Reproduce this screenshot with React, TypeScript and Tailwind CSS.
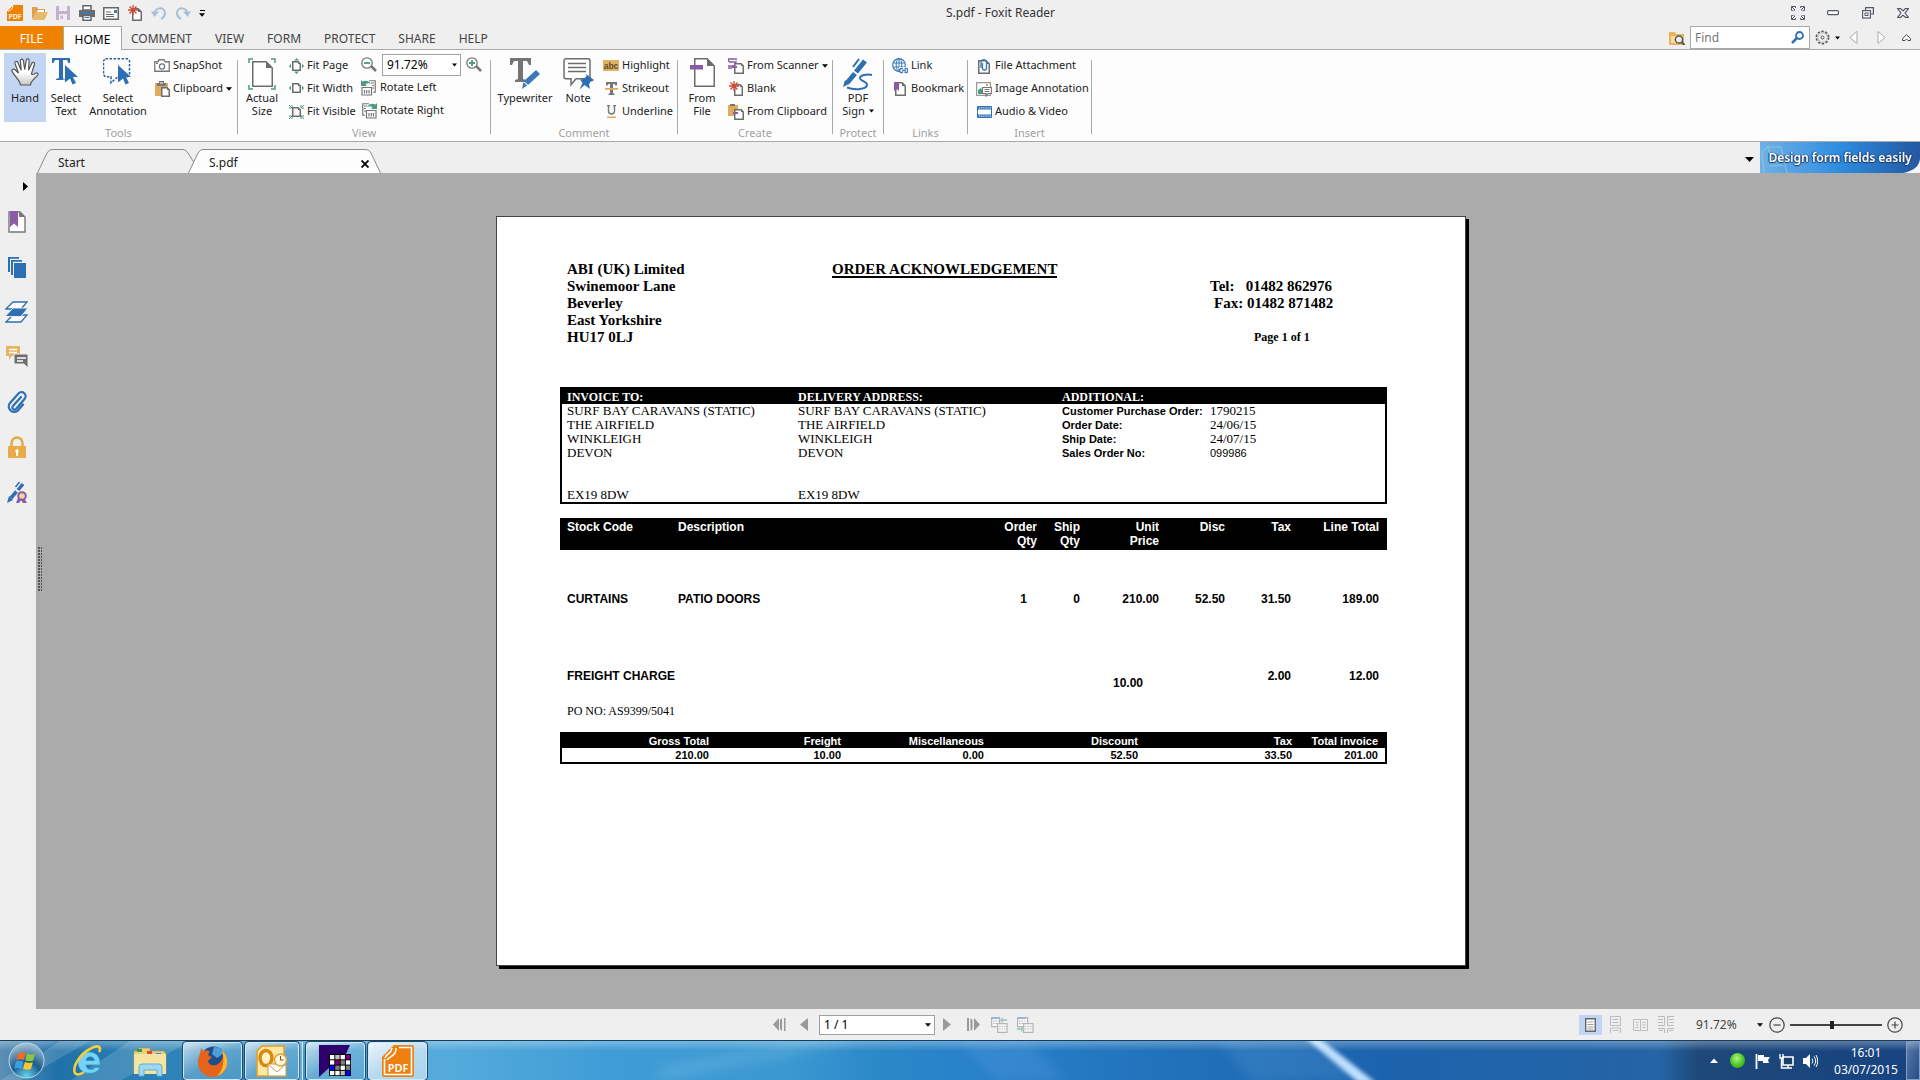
import React from "react";

const UI = "font-['Noto_Sans','Open_Sans',sans-serif]";
const TIMES = "font-['Liberation_Serif',serif]";
const ARIAL = "font-['Liberation_Sans',sans-serif]";

type IconProps = { w?: number; h?: number; box?: string; className?: string; children: React.ReactNode };

function Svg({ w = 16, h = 16, box, className = "", children }: IconProps) {
  return (
    <svg width={w} height={h} viewBox={box ?? `0 0 ${w} ${h}`} fill="none" aria-hidden="true" className={`shrink-0 ${className}`}>
      {children}
    </svg>
  );
}

const Caret = ({ w = 7 }: { w?: number }) => (
  <Svg w={w} h={4} box="0 0 7 4"><path d="M0 0h7L3.5 4z" fill="#000" /></Svg>
);

const Sheet = ({ x = 0, y = 0, w = 10, h = 13, f = 4 }) => (
  <g>
    <path d={`M${x + 0.75} ${y + 0.75}H${x + w - f}L${x + w - 0.75} ${y + f}V${y + h - 0.75}H${x + 0.75}z`} fill="#fff" stroke="#6d6d6d" strokeWidth="1.5" />
    <path d={`M${x + w - f} ${y}V${y + f}H${x + w}z`} fill="#6d6d6d" />
  </g>
);

const Spark = ({ x = 0, y = 0 }) => (
  <path transform={`translate(${x} ${y})`} d="M5 0v10M0 5h10M1.5 1.5l7 7M8.5 1.5l-7 7" stroke="#cf4a35" strokeWidth="1.3" />
);

/* Quick access */
const PdfLogo = () => (
  <Svg w={16} h={16}>
    <path d="M6 0h10v16H0V6z" fill="#f08200" />
    <path d="M0 6C1 3 3 4 4 1.500L6 0M1 6.500C3 5 5 5 6 1" stroke="#fff" strokeWidth="1" />
    <text x="8" y="13.500" textAnchor="middle" fontSize="7" fill="#fff" fontFamily="Noto Sans" fontWeight="600">PDF</text>
  </Svg>
);
const OpenIcon = () => (
  <Svg w={17} h={14}><path d="M1 13V1h5l1 2h7v3H6z" fill="#d9a050" /><path d="M7 4h6v2H6z" fill="#fff" /><path d="M1 14L5 6h12l-3.500 8z" fill="#e8b86c" /></Svg>
);
const SaveIcon = () => (
  <Svg w={14} h={14}><path d="M0 0h14v14H0z" fill="#c3b1cf" /><path d="M3 0h8v5H3zM3 8h8v6H3z" fill="#f0edf2" /><path d="M4.500 9.500H7V13H4.500z" fill="#c3b1cf" /></Svg>
);
const PrintIcon = () => (
  <Svg w={16} h={16}><path d="M4 .75h8V5H4z" fill="#fff" stroke="#666" strokeWidth="1.500" /><path d="M0 5h16v7H0z" fill="#6a6a6a" /><path d="M2 7h12v2H2z" fill="#3d78b4" /><path d="M4 10.500h8v4.750H4z" fill="#fff" stroke="#666" strokeWidth="1.500" /><path d="M5.500 12.500h5" stroke="#3d78b4" /></Svg>
);
const MailIcon = () => (
  <Svg w={16} h={13}><path d="M.75.75h14.500v11.500H.75z" fill="#fff" stroke="#666" strokeWidth="1.500" /><path d="M11 3h3v3h-3z" fill="#3d78b4" /><path d="M3 5h5M3 7.500h8M3 9.500h8" stroke="#666" /></Svg>
);
const NewIcon = () => (
  <Svg w={15} h={16}><Sheet x={4} y={3} w={10} h={13} /><Spark x={0} y={0} /></Svg>
);
const UndoIcon = ({ flip = false }) => (
  <Svg w={16} h={14}>
    <g transform={flip ? "translate(16 0) scale(-1 1)" : undefined}>
      <path d="M3.500 8C4 1 13.500.5 14 6.500c.2 3-1.500 5-4 6.500" stroke="#a9bfd8" strokeWidth="2" />
      <path d="M0 5.500h8L3.500 11z" fill="#a9bfd8" />
    </g>
  </Svg>
);

/* Ribbon, large */
const HandIcon = () => (
  <Svg w={28} h={28}>
    <path d="M8.500 24C7 21 2 16 1 13c-.6-1.800 1.800-2.600 3-1.200L7.500 15 4 5.500C3.400 3.500 6 2.600 6.800 4.500l3.400 7.700L9.400 2.800C9.400.7 12 .5 12.400 2.500l1.300 9.200L15.200 2.300c.4-2 3-1.700 2.900.3l-.5 9.700 3.200-7c.8-1.800 3.200-1 2.700 1l-3 9.200c0 2 2.500.5 3.800-.2 1.800-1 3.500.5 2.200 2-2.200 2.200-5 5-6.300 7L19.500 27h-10z" fill="url(#handFill)" stroke="#555" strokeWidth="1.200" />
    <defs><linearGradient id="handFill" x1="0" y1="0" x2="0" y2="1"><stop offset=".5" stopColor="#fff" /><stop offset="1" stopColor="#c8c8c8" /></linearGradient></defs>
  </Svg>
);
const Pointer = ({ x = 0, y = 0 }) => (
  <path transform={`translate(${x} ${y})`} d="M0 0l13 12H8l3 6-3.500 1.500L5 13.500 0 17.500z" fill="#2d6fb3" />
);
const SelectTextIcon = () => (
  <Svg w={28} h={28}><path d="M0 0h18v5h-1.500L15 2h-4v18l3 1v1H4v-1l3-1V2H3L1.500 5H0z" fill="#2d6fb3" /><path d="M12 4v18l6 6" stroke="#fff" /><Pointer x={13} y={7} /></Svg>
);
const SelectAnnotIcon = () => (
  <Svg w={30} h={28}><path d="M2.500.75h22l2 2v14l-2 2H15l-7 6v-6H2.500l-2-2v-14z" stroke="#2d5f93" strokeWidth="1.500" strokeDasharray="2.500 1.500" /><Pointer x={15} y={7} /></Svg>
);
const ActualSizeIcon = () => (
  <Svg w={28} h={32}><path d="M1 5V1h4M23 1h4v4M27 27v4h-4M5 31H1v-4" stroke="#4a9c82" strokeWidth="1.500" /><path d="M4.750 3.750H18L24.250 10V28.250H4.750z" fill="#fff" stroke="#6d6d6d" strokeWidth="1.500" /><path d="M18 3v7h7z" fill="#6d6d6d" /></Svg>
);
const TypewriterIcon = () => (
  <Svg w={30} h={31}><path d="M0 0h21v7h-2l-2-4h-4v18l3 1v2H5v-2l3-1V3H4L2 7H0z" fill="#757575" /><path d="M26 12l4 4-12 11-4-4z" fill="#3c79b6" /><path d="M13.500 24l3.500 3.500L12 31z" fill="#3c79b6" /></Svg>
);
const NoteIcon = () => (
  <Svg w={31} h={32}><path d="M3 .75h22a2 2 0 012 2v16a2 2 0 01-2 2H13l-5 6v-6H3a2 2 0 01-2-2v-16a2 2 0 012-2z" fill="#fff" stroke="#6d6d6d" strokeWidth="1.500" /><path d="M5 5.500h18M5 9.500h18M5 13.500h18" stroke="#6d6d6d" strokeWidth="1.300" /><path d="M23 16l8 6-2 1.500-1.500 0-1.500 3 1 4.500-5.500-4-5 4.500 3-6.500-2.500-3.500 4-.5 2.500-3z" fill="#2d6fb3" /></Svg>
);
const FromFileIcon = () => (
  <Svg w={25} h={29}><path d="M4.750.75H17L24.250 8v20.250H4.750z" fill="#fff" stroke="#6d6d6d" strokeWidth="1.500" /><path d="M17 0v8h8z" fill="#6d6d6d" /><path d="M0 7h13v4.500H0z" fill="#8a5aa5" /></Svg>
);
const SignIcon = () => (
  <Svg w={30} h={33}><path d="M22 3L13 14" stroke="#2d6fb3" strokeWidth="5" /><path d="M12 15.500L4 25" stroke="#2d6fb3" strokeWidth="5" /><path d="M2 22l4 4-6 3z" fill="#2d6fb3" /><path d="M16 1l-6 8" stroke="#2d6fb3" strokeWidth="2" /><path d="M29 17c-4-1-13 0-12 3.500 1 3 7 3 7 6 0 5-12 6-20 3" stroke="#2d6fb3" strokeWidth="2" /></Svg>
);

/* Ribbon, small */
const CameraIcon = () => (
  <Svg w={16} h={13}><path d="M.75 2.750H4L5 .75h5l1 2h4.250v9.500H.75z" fill="#fff" stroke="#777" strokeWidth="1.300" /><circle cx="8" cy="7.500" r="2.600" stroke="#777" strokeWidth="1.300" /><path d="M2 4.500h2" stroke="#777" /></Svg>
);
const ClipboardIcon = () => (
  <Svg w={15} h={16}><path d="M0 2h13v13H0z" fill="#e0ac5c" /><path d="M4 0h5v2h2v3H2V2h2z" fill="#777" /><path d="M5 1.500h3v1H5z" fill="#fff" /><Sheet x={6} y={6} w={9} h={10} f={3} /></Svg>
);
const FitPageIcon = () => (
  <Svg w={15} h={16}><Sheet x={3} y={3} w={9} h={10} f={3} /><path d="M7.500 0L10 2.500H5zM7.500 16L10 13.500H5zM0 8l2-2.500v5zM15 8l-2-2.500v5z" fill="#4a9c82" /></Svg>
);
const FitWidthIcon = () => (
  <Svg w={15} h={13}><Sheet x={3} y={1} w={9} h={10} f={3} /><path d="M0 6l2-2.500v5zM15 6l-2-2.500v5z" fill="#4a9c82" /></Svg>
);
const FitVisibleIcon = () => (
  <Svg w={15} h={16}><Sheet x={3} y={3} w={9} h={10} f={3} /><path d="M0 4h3V1M15 4h-3V1M0 12h3v3M15 12h-3v3M0 1l2.500 2.500M15 1l-2.500 2.500M0 15l2.500-2.500M15 15l-2.500-2.500" stroke="#4a9c82" /></Svg>
);
const ZoomIcon = ({ plus = false }) => (
  <Svg w={16} h={15}><path d="M10 9l5 5" stroke="#777" strokeWidth="2.500" /><circle cx="6" cy="6" r="5.200" fill="#fff" stroke="#777" strokeWidth="1.300" /><path d={plus ? "M3 6h6M6 3v6" : "M3 6h6"} stroke="#4a9c82" strokeWidth="1.800" /></Svg>
);
const RotateIcon = ({ right = false }) => (
  <Svg w={16} h={16}>
    <g transform={right ? "translate(16 0) scale(-1 1)" : undefined}>
      <path d="M8 .75h6.250v11.500H12M10 3h3M11 5.500h2M11 8h2" stroke="#777" strokeWidth="1.200" />
      <path d="M1 7.500h9.500v7.500H1z" fill="#fff" stroke="#777" strokeWidth="1.200" /><path d="M3.500 10v3.500M5.700 10v3.500M8 10v3.500" stroke="#777" strokeWidth="1.200" />
      <path d="M0 0l1.500 1.500C4 0 8 .5 10 4 7.500 3 6 3.200 4.500 4.500L6 6H0z" fill="#4a9c82" />
    </g>
  </Svg>
);
const HighlightIcon = () => (
  <Svg w={16} h={11}><path d="M0 0h16v11H0z" fill="#e0b45f" /><text x="8" y="8.500" textAnchor="middle" fontSize="8.500" fontWeight="700" fill="#5b4a2a" fontFamily="Liberation Sans">abc</text></Svg>
);
const StrikeoutIcon = () => (
  <Svg w={13} h={13}><path d="M1 0h11v3.500h-1.500L9.500 2H8v9l1.500 1v1h-6v-1L5 11V2H3.500L2.500 3.500H1z" fill="#777" /><path d="M0 6h13v1.800H0z" fill="#e0ac5c" /></Svg>
);
const UnderlineIcon = () => (
  <Svg w={9} h={13}><path d="M1.500 0v6c0 4 6 4 6 0V0M0 .500h3M6 .500h3" stroke="#777" strokeWidth="1.400" /><path d="M0 11.500h9v1.500H0z" fill="#e0ac5c" /></Svg>
);
const ScannerIcon = () => (
  <Svg w={16} h={16}><path d="M0 1h9M1 4h7l-2 4H0M1 4L0 1M0 10h4" stroke="#8a5aa5" strokeWidth="1.400" /><Sheet x={6} y={5} w={10} h={11} f={3} /><path d="M4 8h5v2H4z" fill="#8a5aa5" /></Svg>
);
const BlankIcon = () => (<Svg w={15} h={16}><Sheet x={5} y={3} w={9} h={12} f={3} /><Spark x={0} y={0} /></Svg>);
const FromClipIcon = () => (
  <Svg w={16} h={16}><path d="M0 1h10v11H0z" fill="#e0ac5c" /><path d="M2 0h5v2H2z" fill="#777" /><Sheet x={6} y={5} w={10} h={11} f={3} /><path d="M5 8h5v2H5z" fill="#8a5aa5" /></Svg>
);
const GlobeIcon = () => (
  <Svg w={16} h={16}><circle cx="7" cy="7" r="6.300" fill="#fff" stroke="#3c79b6" strokeWidth="1.200" /><ellipse cx="7" cy="7" rx="2.800" ry="6.300" stroke="#3c79b6" /><path d="M1 5h12M1 9h12M7 1v12" stroke="#3c79b6" /><path d="M7 9h9v7H7z" fill="#fff" /><path d="M11 10.500H9.500a2 2 0 000 4H11M12.500 10.500H14a2 2 0 010 4h-1.500M10 12.500h4" stroke="#3c79b6" strokeWidth="1.500" /></Svg>
);
const BookmarkIcon = () => (
  <Svg w={12} h={14}><Sheet x={1} y={0} w={11} h={14} f={4} /><path d="M0 0h5v9L2.500 7 0 9z" fill="#8a5aa5" /></Svg>
);
const AttachIcon = () => (
  <Svg w={12} h={16}><Sheet x={0} y={2} w={12} h={14} f={4} /><path d="M4.500 5v5a2 2 0 004 0V3.500a3 3 0 00-5.500 0V10" stroke="#3c79b6" strokeWidth="1.300" /></Svg>
);
const ImageAnnotIcon = () => (
  <Svg w={16} h={16}><path d="M.6 1.600h13.800v12.800H.6z" fill="#fff" stroke="#999" strokeWidth="1.200" /><path d="M2 13V9l3-2 3 6z" fill="#4a9c82" /><circle cx="11" cy="4" r="1" fill="#d9822b" /><path d="M6.500 6.500h9v6H12L10 15v-2.500H6.500z" fill="#fff" stroke="#777" strokeWidth="1.200" /><path d="M8.500 8.500h5M8.500 10.500h5" stroke="#777" /></Svg>
);
const VideoIcon = () => (
  <Svg w={15} h={12}><path d="M.5.5h14v11H.5z" fill="#fff" stroke="#2d6fb3" /><path d="M1 1.800h13M1 10.200h13" stroke="#2d6fb3" strokeWidth="2" strokeDasharray="1.300 .8" /><path d="M.5 3h14M.5 9h14" stroke="#2d6fb3" /></Svg>
);

function Small({ icon, label, caret = false }: { icon: React.ReactNode; label: string; caret?: boolean }) {
  return (
    <button type="button" className="flex h-[23px] items-center gap-[3px] whitespace-nowrap text-left">
      <span className="flex w-4 justify-center">{icon}</span>
      <span>{label}</span>
      {caret && <Caret w={6} />}
    </button>
  );
}

function Large({ icon, lines, className, active = false, caret = false }: { icon: React.ReactNode; lines: string[]; className: string; active?: boolean; caret?: boolean }) {
  return (
    <button type="button" className={`flex h-[69px] shrink-0 flex-col items-center ${active ? "bg-[#c2d5f2]" : ""} ${className}`}>
      <span className="flex h-[38px] items-start pt-[5px]">{icon}</span>
      {lines.map((l, i) => (
        <span key={l} className="flex items-center gap-1 whitespace-nowrap leading-[13px]">
          {l}{caret && i === lines.length - 1 && <Caret w={5} />}
        </span>
      ))}
    </button>
  );
}

function Group({ name, className, pad = "", children }: { name: string; className: string; pad?: string; children: React.ReactNode }) {
  return (
    <section aria-label={name} className={`flex shrink-0 ${className}`}>
      <div className="flex min-w-0 grow flex-col">
        <div className={`flex h-[75px] items-start pt-[3px] ${pad}`}>{children}</div>
        <div className="text-center leading-4 text-[#a0a0a0]">{name}</div>
      </div>
      <div className="mt-[10px] h-[74px] w-px bg-[#a9a9a9]" />
    </section>
  );
}

const Stack = ({ className = "", children }: { className?: string; children: React.ReactNode }) => (
  <div className={`flex flex-col pt-px ${className}`}>{children}</div>
);

function TitleBar() {
  const win = "flex h-5 w-[35px] items-center justify-center";
  return (
    <header className="flex h-[26px] items-center">
      <div className="flex flex-1 items-center pl-[3px]">
        {[["Foxit", <PdfLogo />], ["Open", <OpenIcon />], ["Save", <SaveIcon />], ["Print", <PrintIcon />], ["Email", <MailIcon />], ["New", <NewIcon />], ["Undo", <UndoIcon />], ["Redo", <UndoIcon flip />]].map(([n, i]) => (
          <button key={n as string} type="button" aria-label={n as string} className="flex w-6 items-center justify-center">{i}</button>
        ))}
        <button type="button" aria-label="Customize toolbar" className="ml-1 flex flex-col items-center gap-[2px]"><span className="h-px w-[5px] bg-black" /><Caret w={6} /></button>
      </div>
      <h1 className="flex-1 pl-[6px] text-center text-[12px] text-[#333]">
        <span className="mr-[-72px]">S.pdf - Foxit Reader</span>
      </h1>
      <div className="flex flex-1 items-center justify-end">
        <button type="button" aria-label="Full screen" className={win}>
          <Svg w={14} h={14}><path d="M.5.5h4v4h-4zM9.500.5h4v4h-4zM.5 9.500h4v4h-4zM9.500 9.500h4v4h-4z" stroke="#555869" /><path d="M1 1l4 4M13 1L9 5M1 13l4-4M13 13L9 9" stroke="#555869" /><path d="M4.500 2v3h-3M9.500 2v3h3M4.500 12V9h-3M9.500 12V9h3" stroke="#efefef" /></Svg>
        </button>
        <button type="button" aria-label="Minimize" className={win}><Svg w={12} h={6}><rect x=".6" y=".6" width="10.800" height="4" rx="1" stroke="#555869" strokeWidth="1.200" fill="#fff" /></Svg></button>
        <button type="button" aria-label="Restore" className={win}><Svg w={12} h={12}><path d="M3.600 3V.6h7.800V7H9" stroke="#555869" strokeWidth="1.200" /><rect x=".6" y="3.600" width="7.800" height="7.400" fill="#fff" stroke="#555869" strokeWidth="1.200" /><rect x="3" y="6" width="3" height="2.500" stroke="#555869" /></Svg></button>
        <button type="button" aria-label="Close" className={win}><Svg w={12} h={10}><path d="M.6.6h3L6 3 8.400.6h3L8 5l3.400 4.400h-3L6 7 3.600 9.400h-3L4 5z" fill="#fff" stroke="#555869" strokeWidth="1.200" /></Svg></button>
      </div>
    </header>
  );
}

function MenuBar() {
  return (
    <nav className="flex h-[24px] items-stretch border-b border-[#a9a9a9] text-[12px] text-[#444]">
      <button type="button" className="h-[23px] w-[63px] bg-[#f08200] pt-[3px] text-white">FILE</button>
      <button type="button" className="h-[24px] w-[59px] border border-b-0 border-[#a9a9a9] bg-[#fdfdfd] pt-[3px] text-black">HOME</button>
      <div className="flex grow items-center gap-[23px] pl-[9px] pt-[3px]">
        {["COMMENT", "VIEW", "FORM", "PROTECT", "SHARE", "HELP"].map((t) => <button key={t} type="button">{t}</button>)}
      </div>
      <div className="flex items-center pr-[9px]">
        <button type="button" aria-label="Search folder" className="mr-[5px]"><Svg w={16} h={14}><path d="M0 1h6l1 2h8v11H0z" fill="#e8b45c" /><path d="M2 5h12L9 12H2z" fill="#f6dba8" /><circle cx="10" cy="8.500" r="3.600" fill="#f0f0f0" stroke="#555" strokeWidth="1.500" /><path d="M12.500 11l3 3" stroke="#555" strokeWidth="2" /></Svg></button>
        <label className="flex h-[23px] w-[120px] items-center border border-[#a9a9a9] bg-white pl-1 pr-[5px]">
          <input aria-label="Find" placeholder="Find" className="min-w-0 grow bg-transparent text-[12px] outline-none placeholder:text-[#777]" />
          <Svg w={13} h={13}><circle cx="8.500" cy="4.500" r="3.500" stroke="#2d6fb3" strokeWidth="1.800" /><path d="M6 7l-5 5" stroke="#2d6fb3" strokeWidth="2.500" /></Svg>
        </label>
        <button type="button" aria-label="Settings" className="ml-[5px] flex items-center gap-[5px]"><Svg w={15} h={15}><circle cx="7.500" cy="7.500" r="6.200" stroke="#555" strokeWidth="1.500" strokeDasharray="2.400 1.500" /><circle cx="7.500" cy="7.500" r="4.800" stroke="#888" strokeWidth=".6" /><circle cx="7.500" cy="7.500" r="1.500" stroke="#555" /></Svg><Caret w={5} /></button>
        <button type="button" aria-label="Previous" className="ml-[9px]"><Svg w={9} h={13}><path d="M8 .5v12L.8 6.500z" stroke="#aaa" fill="#fff" /></Svg></button>
        <button type="button" aria-label="Next" className="ml-[19px]"><Svg w={9} h={13}><path d="M1 .5v12l7.200-6z" stroke="#aaa" fill="#fff" /></Svg></button>
        <button type="button" aria-label="Collapse ribbon" className="ml-4"><Svg w={9} h={7}><path d="M.6 4.500L4.500.7l3.900 3.800v2H6L4.500 5 3 6.500H.6z" fill="#fff" stroke="#444" /></Svg></button>
      </div>
    </nav>
  );
}

function Ribbon() {
  return (
    <div className="flex h-[92px] border-b border-[#a9a9a9] bg-[#fdfdfd] text-[11px] text-[#222]">
      <Group name="Tools" className="w-[238px]" pad="pl-1">
        <Large icon={<HandIcon />} lines={["Hand"]} className="w-[42px]" active />
        <Large icon={<SelectTextIcon />} lines={["Select", "Text"]} className="w-10" />
        <Large icon={<SelectAnnotIcon />} lines={["Select", "Annotation"]} className="w-16" />
        <Stack className="ml-1"><Small icon={<CameraIcon />} label="SnapShot" /><Small icon={<ClipboardIcon />} label="Clipboard" caret /></Stack>
      </Group>
      <Group name="View" className="w-[253px]" pad="pl-[6px]">
        <Large icon={<ActualSizeIcon />} lines={["Actual", "Size"]} className="w-9" />
        <Stack className="ml-2 w-[73px]"><Small icon={<FitPageIcon />} label="Fit Page" /><Small icon={<FitWidthIcon />} label="Fit Width" /><Small icon={<FitVisibleIcon />} label="Fit Visible" /></Stack>
        <div className="flex flex-col">
          <div className="flex h-[23px] items-center gap-[5px]">
            <button type="button" aria-label="Zoom out"><ZoomIcon /></button>
            <span className="relative">
              <select aria-label="Zoom level" className="block h-[22px] w-[79px] appearance-none border border-[#a0a0a0] bg-white pl-1 text-[12px] text-black"><option>91.72%</option></select>
              <span className="pointer-events-none absolute right-1 top-[9px]"><Caret w={5} /></span>
            </span>
            <button type="button" aria-label="Zoom in"><ZoomIcon plus /></button>
          </div>
          <Small icon={<RotateIcon />} label="Rotate Left" /><Small icon={<RotateIcon right />} label="Rotate Right" />
        </div>
      </Group>
      <Group name="Comment" className="w-[187px]" pad="pl-1">
        <Large icon={<TypewriterIcon />} lines={["Typewriter"]} className="w-[60px]" />
        <Large icon={<NoteIcon />} lines={["Note"]} className="w-[46px]" />
        <Stack className="ml-[2px]"><Small icon={<HighlightIcon />} label="Highlight" /><Small icon={<StrikeoutIcon />} label="Strikeout" /><Small icon={<UnderlineIcon />} label="Underline" /></Stack>
      </Group>
      <Group name="Create" className="w-[155px]" pad="pl-1">
        <Large icon={<FromFileIcon />} lines={["From", "File"]} className="w-10" />
        <Stack className="ml-[6px]"><Small icon={<ScannerIcon />} label="From Scanner" caret /><Small icon={<BlankIcon />} label="Blank" /><Small icon={<FromClipIcon />} label="From Clipboard" /></Stack>
      </Group>
      <Group name="Protect" className="w-[51px]">
        <Large icon={<SignIcon />} lines={["PDF", "Sign"]} className="w-[50px]" caret />
      </Group>
      <Group name="Links" className="w-[84px]" pad="pl-2">
        <Stack><Small icon={<GlobeIcon />} label="Link" /><Small icon={<BookmarkIcon />} label="Bookmark" /></Stack>
      </Group>
      <Group name="Insert" className="w-[124px]" pad="pl-2">
        <Stack><Small icon={<AttachIcon />} label="File Attachment" /><Small icon={<ImageAnnotIcon />} label="Image Annotation" /><Small icon={<VideoIcon />} label="Audio & Video" /></Stack>
      </Group>
    </div>
  );
}

function DocTab({ label, active = false }: { label: string; active?: boolean }) {
  return (
    <div className={`relative flex h-6 items-center text-[12px] text-[#222] ${active ? "-ml-2 w-[193px]" : "w-[159px]"}`}>
      <svg aria-hidden="true" className="absolute inset-0" width="100%" height="24" viewBox={active ? "0 0 193 24" : "0 0 159 24"} preserveAspectRatio="none">
        <path d={active ? "M.5 24L10 4Q12 .5 15 .5H178Q181 .5 183 4L192.500 24" : "M.5 24L10 4Q12 .5 15 .5H146Q149 .5 151 4L158.500 16V24"} fill={active ? "#fdfdfd" : "#efefef"} stroke="#8a8a8a" />
      </svg>
      <button type="button" className="relative grow pl-[21px] pt-1 text-left">{label}</button>
      {active && <button type="button" aria-label="Close tab" className="relative mr-[12px] pt-[6px]"><Svg w={8} h={8}><path d="M.5.5l7 7M7.500.5l-7 7" stroke="#000" strokeWidth="1.800" /></Svg></button>}
    </div>
  );
}

function TabStrip() {
  return (
    <div className="flex h-[31px] items-end pl-[37px]">
      <DocTab label="Start" />
      <DocTab label="S.pdf" active />
      <button type="button" aria-label="Tab list" className="mb-[11px] ml-auto mr-[6px]"><Svg w={9} h={5}><path d="M0 0h9L4.500 5z" fill="#000" /></Svg></button>
      <a href="#forms" className="relative flex h-[31px] w-[160px] items-center justify-center overflow-hidden bg-linear-to-r from-[#6fb1e6] via-[#2d8ce0] to-[#2458a0]">
        <svg aria-hidden="true" className="absolute inset-0" width="160" height="31" viewBox="0 0 160 31" fill="none">
          <path d="M4 31L2 10l5-5h14l6 26M8 5l2 8M7 16l14-1M8 20l14-1M9 24l14-1" stroke="#9fd0c8" opacity=".7" />
          <path d="M160 17c-1 8-7 12-17 14h17z" fill="#f4f6f8" />
        </svg>
        <span className="relative whitespace-nowrap text-[12px] font-semibold text-white [text-shadow:0_1px_1px_#123a6e,1px_0_1px_#123a6e,-1px_0_1px_#123a6e]">Design form fields easily</span>
      </a>
    </div>
  );
}

function SideBar() {
  const items: [string, React.ReactNode][] = [
    ["Bookmarks", <Svg w={18} h={22}><path d="M1 1h11l5 5v15H1z" fill="#fff" stroke="#777" strokeWidth="1.400" /><path d="M11 0v6h6z" fill="#777" /><path d="M2 0h8v16l-4-3.500L2 16z" fill="#8a5aa5" /></Svg>],
    ["Pages", <Svg w={18} h={22}><path d="M0 1h11v1.800H2V16H0zM3 4h11v1.800H5V19H3z" fill="#2d6fb3" /><path d="M6 7h12v15H6z" fill="#2d6fb3" /></Svg>],
    ["Layers", <Svg w={23} h={22}><path d="M8 1h14l-6 7H1zM8 14h14l-6 7H1z" fill="#fff" stroke="#2d6fb3" strokeWidth="1.300" /><path d="M8 7h15l-7 8.500H0z" fill="#2d6fb3" stroke="#efefef" /></Svg>],
    ["Comments", <Svg w={22} h={22}><path d="M0 0h14v10H6l-3 3.500V10H0z" fill="#e5b563" /><path d="M3 3.500h8M3 6.500h8" stroke="#fff" strokeWidth="1.300" /><path d="M8 8h14v14l-4-4H8z" fill="#6d6d6d" stroke="#efefef" /><path d="M11 12h9M11 15h6" stroke="#fff" strokeWidth="1.300" /></Svg>],
    ["Attachments", <Svg w={20} h={22}><path d="M14 6L6 15a2 2 0 003 3l8.500-10A4 4 0 0011.500 2.500L3 12a5.500 5.500 0 008 7.500l5-6" stroke="#2d6fb3" strokeWidth="2.200" strokeLinecap="round" /></Svg>],
    ["Security", <Svg w={18} h={22}><path d="M3.500 11V7a5.500 5.500 0 0111 0v4" stroke="#e5a84a" strokeWidth="2.500" /><path d="M0 10h18v12H0z" fill="#e8ab48" /><path d="M9 13a2 2 0 011 3.500V20H8v-3.500A2 2 0 019 13z" fill="#fff" /></Svg>],
    ["Signatures", <Svg w={20} h={22}><path d="M16 3l-5 6M9.500 10.500L4 17" stroke="#2d6fb3" strokeWidth="3.500" /><path d="M2 15l4 4-6 3z" fill="#2d6fb3" /><path d="M8.500 6l4-5" stroke="#2d6fb3" strokeWidth="1.500" /><path d="M11 17l-2 5h3l2-3 2 3h4l-3-5z" fill="#8a5aa5" /><circle cx="15" cy="15" r="3.800" fill="#f2d7a0" stroke="#8a5aa5" strokeWidth="2" /></Svg>],
  ];
  return (
    <aside className="flex w-9 shrink-0 flex-col items-center bg-[#efefef]">
      <button type="button" aria-label="Expand panel" className="ml-[14px] flex h-[26px] items-center"><Svg w={5} h={9}><path d="M0 0l5 4.500L0 9z" fill="#000" /></Svg></button>
      {items.map(([n, i]) => <button key={n} type="button" aria-label={n} className="mr-[3px] flex h-[45px] items-center">{i}</button>)}
    </aside>
  );
}

const ADDRESS = ["SURF BAY CARAVANS (STATIC)", "THE AIRFIELD", "WINKLEIGH", "DEVON", "", "", "EX19 8DW"];

function Paper() {
  const extra = [["Customer Purchase Order:", "1790215"], ["Order Date:", "24/06/15"], ["Ship Date:", "24/07/15"], ["Sales Order No:", "099986"]];
  return (
    <article className={`mt-[43px] h-[750px] w-[970px] border border-[#444] bg-white pl-[63px] pr-[78px] pt-11 text-black shadow-[3px_3px_0_#000] ${ARIAL}`}>
      <div className={`flex h-[126px] pl-[7px] text-[15px] font-bold leading-[17px] ${TIMES}`}>
        <address className="w-[265px] not-italic">ABI (UK) Limited<br />Swinemoor Lane<br />Beverley<br />East Yorkshire<br />HU17 0LJ</address>
        <h2 className="w-[378px]"><span className="inline-block h-[17px] border-b-2 border-black">ORDER ACKNOWLEDGEMENT</span></h2>
        <div className="whitespace-pre pt-[17px]">
          <div>Tel:   01482 862976</div>
          <div className="pl-1">Fax: 01482 871482</div>
          <div className="pl-11 pt-[17px] text-[12px]">Page 1 of 1</div>
        </div>
      </div>

      <section className={`h-[117px] border-2 border-black text-[13px] leading-[14px] ${TIMES}`}>
        <div className="grid h-[15px] grid-cols-[231px_264px_1fr] bg-black pl-[5px] text-[12px] font-bold leading-[16px] text-white">
          <div>INVOICE TO:</div><div>DELIVERY ADDRESS:</div><div>ADDITIONAL:</div>
        </div>
        <div className="grid grid-cols-[231px_264px_1fr] pl-[5px]">
          {[0, 1].map((k) => <address key={k} className="not-italic">{ADDRESS.map((l, i) => <div key={i} className="h-[14px] whitespace-nowrap">{l}</div>)}</address>)}
          <dl className="grid auto-rows-[14px] grid-cols-[148px_1fr]">
            {extra.map(([a, b], i) => (
              <React.Fragment key={a}>
                <dt className={`whitespace-nowrap text-[11px] font-bold ${ARIAL}`}>{a}</dt>
                <dd className={i === 3 ? `text-[11px] ${ARIAL}` : ""}>{b}</dd>
              </React.Fragment>
            ))}
          </dl>
        </div>
      </section>

      <table className="mt-[14px] w-full table-fixed text-right text-[12px] font-bold leading-[14px]">
        <colgroup>
          <col className="w-[118px]" /><col className="w-[259px]" /><col className="w-[100px]" /><col className="w-[43px]" /><col className="w-[79px]" /><col className="w-[66px]" /><col className="w-[66px]" /><col />
        </colgroup>
        <thead className="bg-black text-white">
          <tr className="h-8 align-top">
            <th className="pl-[7px] pt-[2px] text-left">Stock Code</th><th className="pt-[2px] text-left">Description</th>
            <th className="pt-[2px]">Order<br />Qty</th><th className="pt-[2px]">Ship<br />Qty</th><th className="pt-[2px]">Unit<br />Price</th>
            <th className="pt-[2px]">Disc</th><th className="pt-[2px]">Tax</th><th className="pr-2 pt-[2px]">Line Total</th>
          </tr>
        </thead>
        <tbody>
          <tr className="h-[76px] align-bottom">
            <td className="pb-5 pl-[7px] text-left">CURTAINS</td><td className="pb-5 text-left">PATIO DOORS</td>
            <td className="pb-5 pr-[10px]">1</td><td className="pb-5">0</td><td className="pb-5">210.00</td><td className="pb-5">52.50</td><td className="pb-5">31.50</td><td className="pb-5 pr-2">189.00</td>
          </tr>
          <tr className="h-[77px] align-bottom">
            <td colSpan={2} className="pb-5 pl-[7px] text-left">FREIGHT CHARGE</td>
            <td /><td /><td className="pb-[13px] pr-4">10.00</td><td /><td className="pb-5">2.00</td><td className="pb-5 pr-2">12.00</td>
          </tr>
        </tbody>
      </table>
      <p className={`pl-[7px] pt-px text-[12px] leading-[14px] ${TIMES}`}>PO NO: AS9399/5041</p>

      <table className="mt-[14px] w-full table-fixed border-2 border-black text-right text-[11px] font-bold leading-[14px]">
        <colgroup><col className="w-[148px]" /><col className="w-[132px]" /><col className="w-[143px]" /><col className="w-[154px]" /><col className="w-[154px]" /><col /></colgroup>
        <thead className="bg-black text-white">
          <tr><th>Gross Total</th><th>Freight</th><th>Miscellaneous</th><th>Discount</th><th>Tax</th><th className="pr-[7px]">Total invoice</th></tr>
        </thead>
        <tbody>
          <tr><td>210.00</td><td>10.00</td><td>0.00</td><td>52.50</td><td>33.50</td><td className="pr-[7px]">201.00</td></tr>
        </tbody>
      </table>
    </article>
  );
}

const PageNav = ({ label, d, w = 9, className }: { label: string; d: string; w?: number; className: string }) => (
  <button type="button" aria-label={label} className={className}><Svg w={w} h={13}><path d={d} fill="#999" /></Svg></button>
);

const Copy = ({ next = false }) => (
  <Svg w={17} h={16}><path d={next ? "M.6.6h10v9H.6z" : "M.6.6h8v9h-8z"} fill="#f7f7f7" stroke="#b5b5b5" strokeWidth="1.200" /><path d="M0 1h9" stroke="#9fb4d6" strokeWidth="2" /><path d="M2 4h6M2 6.500h6" stroke="#bbb" strokeDasharray="1.500 1" /><path d="M6.600 6.600h9.400v8.800H6.600z" fill="#f7f7f7" stroke="#b5b5b5" strokeWidth="1.200" /><path d="M8 9.500h7M8 12h7" stroke="#bbb" strokeDasharray="1.500 1" />{next ? <path d="M0 11h4V9l4 3-4 3v-2H0z" fill="#a6cdbb" /> : <path d="M16 2h-4V0L8.500 3 12 6V4h4z" fill="#a6cdbb" />}</Svg>
);

function StatusBar() {
  const view = "flex h-5 w-[23px] items-center justify-center";
  return (
    <div className="flex h-[31px] items-center bg-[#efefef]">
      <div className="flex flex-1 items-center justify-end">
        <PageNav label="First page" className="mr-[14px]" w={13} d="M6 0v13L0 6.500zM9 0v13L7 11V2zM12.500 0v13H11V0z" />
        <PageNav label="Previous page" className="mr-[10px]" d="M8 0v13L0 6.500z" />
        <span className="relative">
          <select aria-label="Page" className="block h-5 w-[116px] appearance-none border border-[#a0a0a0] bg-white pl-1 text-[12px] leading-none text-black"><option>1 / 1</option></select>
          <span className="pointer-events-none absolute right-1 top-2"><Caret w={6} /></span>
        </span>
        <div className="w-[25px]" />
      </div>
      <div className="flex flex-1 items-center">
        <div className="-ml-[17px] flex items-center">
          <PageNav label="Next page" className="mr-[15px]" d="M0 0v13l8-6.500z" />
          <PageNav label="Last page" className="mr-[11px]" w={13} d="M0 0h2v13H0zM3.500 0l2 2v9l-2 2zM7 0v13l6-6.500z" />
          <button type="button" aria-label="Previous view" className="mr-[9px]"><Copy /></button>
          <button type="button" aria-label="Next view"><Copy next /></button>
        </div>
        <div className="ml-auto flex items-center gap-[2px]">
          <button type="button" aria-label="Single page" className={`${view} bg-[#c2d5f2]`}><Svg w={11} h={14}><path d="M.7.7h9.600v12.600H.7z" fill="#fff" stroke="#666" strokeWidth="1.400" /><path d="M2.500 4h6M2.500 6.500h6M2.500 9h6M2.500 11h6" stroke="#888" strokeWidth=".8" /></Svg></button>
          <button type="button" aria-label="Continuous" className={view}><Svg w={11} h={17}><path d="M.5.5h10v9H.5zM.5 17v-5h10v5M2.500 3.500h6M2.500 6.500h6M2.500 14.500h6" stroke="#bcbcbc" /></Svg></button>
          <button type="button" aria-label="Facing" className={view}><Svg w={15} h={13}><path d="M.5 1.500h7v11h-7zM7.500 1.500h7v11h-7zM2.500 4.500h3M2.500 7h3M2.500 9.500h3M9.500 4.500h3M9.500 7h3M9.500 9.500h3" stroke="#bcbcbc" /></Svg></button>
          <button type="button" aria-label="Continuous facing" className={view}><Svg w={16} h={17}><path d="M0 .5h6.500v9H0M16 .5H9.500v9H16M0 12.500h6.500V17M16 12.500H9.500V17M0 3.500h5M0 6.500h5M11 3.500h5M11 6.500h5M1 14.500h4M11 14.500h4" stroke="#bcbcbc" /></Svg></button>
        </div>
        <button type="button" className="ml-[19px] flex w-[67px] items-center justify-between text-[12px] text-[#444]">91.72%<Caret w={6} /></button>
        <button type="button" aria-label="Zoom out" className="ml-[6px]"><Svg w={16} h={16}><circle cx="8" cy="8" r="7.200" stroke="#444" strokeWidth="1.200" /><path d="M4.500 8h7" stroke="#444" strokeWidth="1.200" /></Svg></button>
        <input type="range" aria-label="Zoom" min={0} max={100} defaultValue={45} className="mx-[5px] h-4 w-[92px] appearance-none bg-transparent [&::-webkit-slider-runnable-track]:h-[2px] [&::-webkit-slider-runnable-track]:bg-[#444] [&::-webkit-slider-thumb]:-mt-[3px] [&::-webkit-slider-thumb]:h-2 [&::-webkit-slider-thumb]:w-[4px] [&::-webkit-slider-thumb]:appearance-none [&::-webkit-slider-thumb]:bg-[#222]" />
        <button type="button" aria-label="Zoom in" className="mr-[17px]"><Svg w={16} h={16}><circle cx="8" cy="8" r="7.200" stroke="#444" strokeWidth="1.200" /><path d="M4.500 8h7M8 4.500v7" stroke="#444" strokeWidth="1.200" /></Svg></button>
      </div>
    </div>
  );
}

function TaskBar() {
  const app = "flex h-[38px] items-center justify-center rounded-[3px] border border-[#cfe8f8] outline outline-[#1d4a6c]";
  const glass = "bg-linear-to-br from-white/70 via-white/20 to-white/10";
  return (
    <footer className="relative flex h-10 items-center overflow-hidden border-t border-[#163f5e] text-white">
      <svg aria-hidden="true" className="absolute inset-0" width="100%" height="40" viewBox="0 0 1920 40" preserveAspectRatio="none">
        <defs>
          <linearGradient id="sky"><stop offset="0" stopColor="#5c8fb4" /><stop offset=".03" stopColor="#1f71a8" /><stop offset=".1" stopColor="#2f86ba" /><stop offset=".23" stopColor="#55abdc" /><stop offset=".32" stopColor="#3f9cd6" /><stop offset=".41" stopColor="#3b98d0" /><stop offset=".46" stopColor="#2b88c8" /><stop offset=".52" stopColor="#277fca" /><stop offset=".6" stopColor="#2173bb" /><stop offset=".72" stopColor="#1c63ad" /><stop offset=".865" stopColor="#2564a5" /><stop offset=".885" stopColor="#1d4878" /><stop offset="1" stopColor="#174382" /></linearGradient>
          <linearGradient id="sheen" x1="0" y1="0" x2="0" y2="1"><stop offset="0" stopColor="#fff" stopOpacity=".3" /><stop offset=".25" stopColor="#fff" stopOpacity="0" /></linearGradient>
          <filter id="soft" x="-20%" y="-50%" width="140%" height="200%"><feGaussianBlur stdDeviation="2" /></filter>
          <filter id="softer" x="-20%" y="-50%" width="140%" height="200%"><feGaussianBlur stdDeviation="6" /></filter>
        </defs>
        <rect width="1920" height="40" fill="url(#sky)" />
        <path d="M0 40L60 0h30L20 40zM130 0h60l-70 40h-50z" fill="#fff" opacity=".15" />
        <path d="M660 40L860 0h-60L660 25z" fill="#9fd4f4" opacity=".2" filter="url(#softer)" />
        <path d="M960 0h70l35 40h-70zM1220 0h85l60 40h-115z" fill="#6aa9e0" opacity=".22" filter="url(#softer)" />
        <path d="M1304 -4h14l58 46h-17z" fill="#bfdfff" filter="url(#soft)" />
        <rect width="1920" height="40" fill="url(#sheen)" />
      </svg>
      <div className="relative flex items-center">
        <button type="button" aria-label="Start" className="ml-2 mr-7">
          <Svg w={37} h={37}>
            <defs><radialGradient id="orb" cx=".5" cy=".95" r=".95"><stop offset="0" stopColor="#5fd4f0" /><stop offset=".45" stopColor="#1c5c8a" /><stop offset="1" stopColor="#a9c7da" /></radialGradient></defs>
            <circle cx="18.500" cy="18.500" r="17.500" fill="url(#orb)" stroke="#b9d7e6" />
            <path d="M10 11.500c3-1.800 5-1.500 7.500-.3L15.800 18c-2.500-1.200-4.800-1.300-7.600.2z" fill="#ee6a26" /><path d="M19 11.500c3 1.200 5 1.300 8 .2L25.200 18.500c-3 1.200-5 1-7.900-.2z" fill="#8cc63f" /><path d="M7.800 19.800c2.800-1.500 5-1.300 7.500-.1L13.600 26.500c-2.700-1.200-4.900-1-7.500.2z" fill="#39a0e4" /><path d="M16.900 20c2.800 1.200 5 1.400 7.900.2L23 27c-3 1.200-5 1-7.900-.2z" fill="#fdc72f" />
          </Svg>
        </button>
        <button type="button" aria-label="Internet Explorer" className="mr-[29px]">
          <Svg w={31} h={32}><path d="M27 20H13c.3 5 7 6 9 2.500h5C24 31 5 31 5 17.500 5 4 28.500 2 27 20zM13 15.500h8.500c-.5-5-8-5-8.500 0z" fill="#75d3f6" stroke="#2e92c8" strokeWidth=".7" /><path d="M26 7C29 2 25-1 17 4 7 9-1 22 2 28c2 3 6 1 9-1" stroke="#f5cf3a" strokeWidth="2.600" /></Svg>
        </button>
        <button type="button" aria-label="Windows Explorer" className="mr-[16px]">
          <Svg w={34} h={32}><path d="M1 6h5V3h11v3h14l2 3v19H1z" fill="#e9cf7c" stroke="#b99a45" strokeWidth=".7" /><path d="M4 4h5v3H4z" fill="#2f9b4b" /><path d="M14 6h5v3h-5z" fill="#d84b3a" /><path d="M23 8h5v3h-5z" fill="#3b8ed6" /><path d="M1 9h32v20H1z" fill="#f5e3a1" /><path d="M6 31v-9a3 3 0 013-3h17a3 3 0 013 3v9h-5v-6H11v6z" fill="#9fd8f2" stroke="#5daed4" /></Svg>
        </button>
        <button type="button" aria-label="Firefox" className={`${app} w-[59px] ${glass}`}>
          <Svg w={32} h={32}><circle cx="16.500" cy="14" r="12.500" fill="#1e4f8c" /><path d="M17 2c6 0 9 3 10 6l-7 5-5-4z" fill="#4d9fd6" /><path d="M4 3c1 2 2 3 4 3 2-1 4 0 5 1-2 1-2 2-1 4l3 1-4 4c1 4 5 6 10 3 5-3 6-9 4-14 8 6 8 26-9 27C2 32-2 18 3 9z" fill="#e5641c" /><path d="M25 5c8 7 7 22-5 26 6-5 8-15 5-26z" fill="#fbb92c" /></Svg>
        </button>
        <button type="button" aria-label="Outlook" className={`${app} ml-[3px] w-[54px] ${glass}`}>
          <Svg w={32} h={32}><path d="M1 6l5-5h22v30H1z" fill="#fae9a4" stroke="#e39c24" strokeWidth="1.500" /><ellipse cx="10" cy="13" rx="6" ry="7.500" fill="#fff3c4" stroke="#d98712" strokeWidth="3.500" /><path d="M12 19h18v12H12z" fill="#fff" stroke="#c89c3c" /><path d="M12 19l9 8 9-8" stroke="#c89c3c" /><circle cx="24.500" cy="15" r="6" fill="#fdf6dd" stroke="#e0a23a" strokeWidth="1.500" /><path d="M24.500 11v4h3" stroke="#75551a" /></Svg>
        </button>
        <span className="h-[38px] w-1 border-r border-[#cfe8f8] bg-white/20" />
        <button type="button" aria-label="Order system" className={`${app} ml-[3px] w-[59px] ${glass}`}>
          <Svg w={33} h={32}><path d="M0 0h31l-5 11-15 11L0 32z" fill="#2d006c" /><path d="M10 9h22v22H10z" fill="#000" />
            {["#fff", "#c0c0c0", "#fff", "#800080", "#fff", "#800080", "#808080", "#fff", "#00f", "#808080", "#fff", "#808080", "#fff", "#fff", "#c0c0c0", "#00f"].map((c, i) => <rect key={i} x={11 + (i % 4) * 5.3} y={10 + Math.floor(i / 4) * 5.3} width="4.300" height="4.300" fill={c} />)}
          </Svg>
        </button>
        <button type="button" aria-label="Foxit Reader" className={`${app} ml-[3px] w-[59px] bg-linear-to-br from-white/90 via-white/60 to-white/50`}>
          <Svg w={32} h={32}><path d="M12 0h18a2 2 0 012 2v28a2 2 0 01-2 2H2a2 2 0 01-2-2V12z" fill="#ee8012" /><path d="M2.500 14v15.500h27v-27H17M3 13c2-6 6-3 7-10M5 15c4-5 9-4 9-12" stroke="#fff" strokeWidth="1.600" /><text x="16" y="27" textAnchor="middle" fontSize="11" fontWeight="600" fill="#fff" fontFamily="Noto Sans">PDF</text></Svg>
        </button>
      </div>
      <div className="relative ml-auto flex h-full items-center">
        <button type="button" aria-label="Show hidden icons" className="mr-3"><Svg w={8} h={5}><path d="M0 5l4-4.500L8 5z" fill="#fff" /></Svg></button>
        <span className="mr-[10px] h-[15px] w-[15px] rounded-full bg-radial-[at_45%_35%] from-[#b5f77c] via-[#4fc92c] to-[#2a8e18]" />
        <Svg w={15} h={16} className="mr-[9px]"><path d="M1.500 1v15" stroke="#fff" strokeWidth="1.800" /><path d="M3 2h6v2h6l-2 3 1 3H8V8H3z" fill="#fff" /></Svg>
        <Svg w={15} h={16} className="mr-[9px]"><path d="M4 4h10v8H4z" stroke="#fff" strokeWidth="1.600" fill="#1c3f66" /><path d="M5 15h8M9 12v3M1 1v4h3V1M2.500 5v10H5" stroke="#fff" strokeWidth="1.400" /></Svg>
        <Svg w={15} h={14} className="mr-4"><path d="M0 4h3l4-4v14l-4-4H0z" fill="#fff" /><path d="M9 4.500q2 2.500 0 5M11 2.500q3.500 4.500 0 9M13 1q3.500 6 0 12" stroke="#fff" /></Svg>
        <time className="mr-2 w-16 whitespace-nowrap text-center text-[12px] leading-[17px]">16:01<br />03/07/2015</time>
        <button type="button" aria-label="Show desktop" className="h-full w-[14px] border border-[#7f9fc4] bg-linear-to-br from-white/30 to-white/5" />
      </div>
    </footer>
  );
}

export default function App() {
  return (
    <div className={`flex min-h-screen flex-col bg-[#efefef] text-[12px] ${UI}`}>
      <TitleBar />
      <MenuBar />
      <Ribbon />
      <TabStrip />
      <main className="flex grow bg-[#ababab]">
        <SideBar />
        <div className="flex w-[6px] items-center pl-[2px]">
          <div className="mb-11 h-11 w-[4px] bg-[radial-gradient(circle_at_1px_1px,#555_0.8px,transparent_1px)] bg-[size:3px_3px]" />
        </div>
        <div className="flex grow items-start justify-center"><Paper /></div>
      </main>
      <StatusBar />
      <TaskBar />
    </div>
  );
}
